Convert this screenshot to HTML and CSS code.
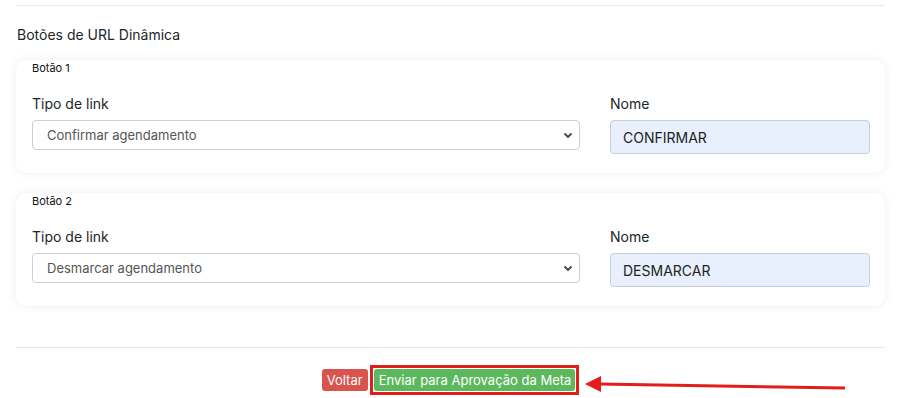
FILE: index.html
```html
<!DOCTYPE html>
<html lang="pt-BR">
<head>
  <meta charset="UTF-8">
  <title>Botões de URL Dinâmica</title>
  <link rel="stylesheet" href="styles.css">
</head>
<body>

<div class="page">
  <div class="divider top"></div>

  <h2 class="section-title">Botões de URL Dinâmica</h2>

  <div class="card">
    <div class="card-title">Botão 1</div>
    <div class="row">
      <div class="field">
        <label>Tipo de link</label>
        <div class="select">
          <span>Confirmar agendamento</span>
          <svg width="10" height="7" viewBox="0 0 10 7"><path d="M1.5 1.5 L5 5 L8.5 1.5" fill="none" stroke="#444" stroke-width="1.8"/></svg>
        </div>
      </div>
      <div class="field">
        <label>Nome</label>
        <div class="input">CONFIRMAR</div>
      </div>
    </div>
  </div>

  <div class="card">
    <div class="card-title">Botão 2</div>
    <div class="row">
      <div class="field">
        <label>Tipo de link</label>
        <div class="select">
          <span>Desmarcar agendamento</span>
          <svg width="10" height="7" viewBox="0 0 10 7"><path d="M1.5 1.5 L5 5 L8.5 1.5" fill="none" stroke="#444" stroke-width="1.8"/></svg>
        </div>
      </div>
      <div class="field">
        <label>Nome</label>
        <div class="input">DESMARCAR</div>
      </div>
    </div>
  </div>

  <div class="divider bottom"></div>

  <div class="actions">
    <button class="btn btn-danger">Voltar</button>
    <span class="highlight">
      <button class="btn btn-success">Enviar para Aprovação da Meta</button>
    </span>
  </div>
</div>

<!-- annotation arrow -->
<svg class="arrow" width="270" height="24" viewBox="0 0 270 24">
  <line x1="260" y1="14" x2="14" y2="10" stroke="#e31c1c" stroke-width="3"/>
  <polygon points="0,10 16,2 16,18" fill="#e31c1c"/>
</svg>

</body>
</html>
```

FILE: styles.css
```css
html, body {
  margin: 0;
  background: #fff;
  font-family: Inter, 'Noto Sans', sans-serif;
  color: #212529;
}
.page {
  padding: 0 22px 0 16px;
}
.divider {
  border-top: 1px solid #e9e9e9;
}
.divider.top {
  margin-top: 5px;
}
.section-title {
  margin: 20px 0 0 1px;
  font-size: 14px;
  font-weight: 400;
  line-height: 17px;
}
.card {
  margin-top: 17px;
  background: #fff;
  border-radius: 10px;
  box-shadow: 0 0 10px rgba(0, 0, 0, 0.07);
  padding: 1px 15px 19px 16px;
}
.card + .card {
  margin-top: 20px;
}
.card-title {
  font-size: 11px;
  font-weight: 400;
  line-height: 14px;
  color: #111;
}
.row {
  display: grid;
  grid-template-columns: 1fr 260px;
  gap: 30px;
  margin-top: 20px;
  align-items: start;
}
.field label {
  display: block;
  font-size: 14px;
  line-height: 17px;
  margin-bottom: 8px;
}
.select {
  height: 28px;
  border: 1px solid #cfcfcf;
  border-radius: 4px;
  display: flex;
  align-items: center;
  justify-content: space-between;
  padding: 0 4px 0 14px;
  font-size: 13px;
  color: #555;
}
.select svg {
  margin-right: 2px;
}
.input {
  height: 32px;
  border: 1px solid #c7ced8;
  border-radius: 4px;
  background: #e8f0fe;
  display: flex;
  align-items: center;
  padding-left: 12px;
  font-size: 14px;
  color: #222;
}
.divider.bottom {
  margin-top: 41px;
}
.actions {
  display: flex;
  justify-content: center;
  align-items: center;
  gap: 2px;
  margin-top: 17px;
}
.btn {
  border: none;
  border-radius: 3px;
  color: #fff;
  font-family: Inter, 'Noto Sans', sans-serif;
  font-size: 13px;
  height: 22px;
  padding: 0 5px;
  line-height: 22px;
  display: block;
}
.btn-danger {
  background: #d9534f;
}
.btn-success {
  background: #5cb85c;
  padding: 0 4px 0 5px;
}
.highlight {
  display: flex;
  border: 3px solid #e31c1c;
  padding: 1px;
}
.arrow {
  position: absolute;
  left: 585px;
  top: 374px;
}
```
